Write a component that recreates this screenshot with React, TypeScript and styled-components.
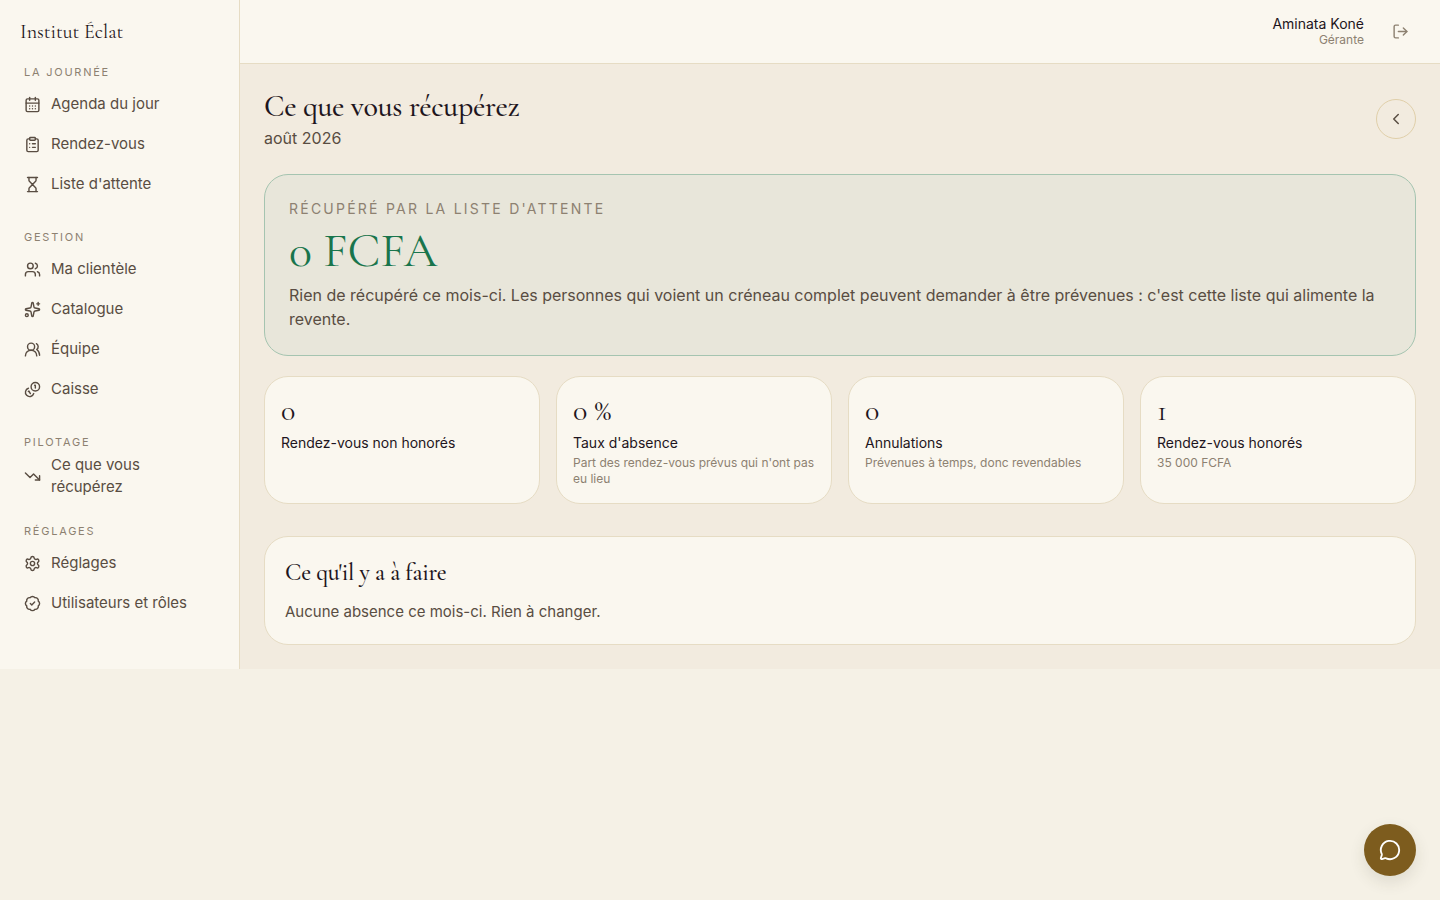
import React from "react";
import styled, { createGlobalStyle } from "styled-components";
import {
  BadgeCheck,
  CalendarDays,
  ChevronLeft,
  ClipboardList,
  Hourglass,
  LogOut,
  MessageCircle,
  Settings,
  Sparkles,
  TrendingDown,
  Users,
  UsersRound,
} from "lucide-react";

const color = {
  page: "#f5f1e6",
  main: "#f2ebdf",
  surface: "#faf7ef",
  line: "#e6dcc4",
  lineStrong: "#e0cfa9",
  ink: "#1e1520",
  body: "#594d42",
  muted: "#8d8171",
  green: "#19754c",
  greenSurface: "#e8e6da",
  greenLine: "#a5c4b0",
  gold: "#7d5c1e",
};

const serif = `"Cormorant Garamond", "Liberation Serif", serif`;

const GlobalStyle = createGlobalStyle`
  *, *::before, *::after { box-sizing: border-box; }
  body {
    margin: 0;
    background: ${color.page};
    color: ${color.ink};
    font: 400 16px/24px Inter, sans-serif;
  }
  h1, h2, p, ul { margin: 0; padding: 0; }
  ul { list-style: none; }
  button { font: inherit; cursor: pointer; }
`;

const Shell = styled.div`
  display: grid;
  grid-template-columns: 240px minmax(0, 1fr);
`;

const Sidebar = styled.aside`
  background: ${color.surface};
  border-right: 1px solid ${color.line};
`;

const Brand = styled.a`
  display: flex;
  align-items: center;
  height: 64px;
  padding: 0 20px;
  color: ${color.ink};
  font-family: ${serif};
  font-size: 20px;
  text-decoration: none;
`;

const Nav = styled.nav`
  display: flex;
  flex-direction: column;
  gap: 25px;
  padding: 0 12px 24px;
`;

const NavTitle = styled.h2`
  margin-bottom: 4px;
  padding: 0 12px;
  color: ${color.muted};
  font-size: 11px;
  font-weight: 400;
  line-height: 16px;
  letter-spacing: 0.16em;
  text-transform: uppercase;
`;

const NavLink = styled.a`
  display: flex;
  align-items: center;
  gap: 10px;
  min-height: 40px;
  padding: 0 12px;
  color: ${color.body};
  font-size: 15px;
  line-height: 22px;
  text-decoration: none;

  svg { flex: none; }
`;

const Column = styled.div`
  display: flex;
  flex-direction: column;
  min-width: 0;
`;

const TopBar = styled.header`
  display: flex;
  align-items: center;
  justify-content: flex-end;
  gap: 16px;
  height: 64px;
  padding: 0 20px 0 24px;
  background: ${color.surface};
  border-bottom: 1px solid ${color.line};
`;

const UserBlock = styled.div`
  text-align: right;
`;

const UserName = styled.p`
  font-size: 14px;
  line-height: 16px;
`;

const UserRole = styled.p`
  color: ${color.muted};
  font-size: 12px;
  line-height: 16px;
`;

const LogoutButton = styled.button`
  display: grid;
  place-items: center;
  width: 40px;
  height: 40px;
  padding: 0;
  border: 0;
  background: none;
  color: ${color.muted};
`;

const Main = styled.main`
  flex: 1;
  padding: 24px;
  background: ${color.main};
`;

const PageHead = styled.div`
  display: flex;
  align-items: center;
  justify-content: space-between;
  margin-bottom: 24px;
`;

const PageTitle = styled.h1`
  font-family: ${serif};
  font-size: 30px;
  font-weight: 500;
  line-height: 38px;
  letter-spacing: -0.01em;
`;

const Period = styled.p`
  color: ${color.body};
`;

const RoundButton = styled.button`
  display: grid;
  place-items: center;
  width: 40px;
  height: 40px;
  padding: 0;
  border: 1px solid ${color.lineStrong};
  border-radius: 50%;
  background: none;
  color: ${color.body};
`;

const Hero = styled.section`
  margin-bottom: 20px;
  padding: 24px;
  border: 1px solid ${color.greenLine};
  border-radius: 24px;
  background: ${color.greenSurface};
`;

const HeroLabel = styled.p`
  color: ${color.muted};
  font-size: 14px;
  line-height: 20px;
  letter-spacing: 0.16em;
  text-transform: uppercase;
`;

const HeroValue = styled.p`
  color: ${color.green};
  font-family: ${serif};
  font-size: 48px;
  line-height: 64px;
`;

const HeroText = styled.p`
  color: ${color.body};
`;

const Stats = styled.ul`
  display: grid;
  grid-template-columns: repeat(4, minmax(0, 1fr));
  gap: 16px;
  margin-bottom: 32px;
`;

const Stat = styled.li`
  padding: 16px;
  border: 1px solid ${color.line};
  border-radius: 24px;
  background: ${color.surface};
`;

const StatValue = styled.p`
  margin-bottom: 4px;
  font-family: ${serif};
  font-size: 30px;
  line-height: 36px;
`;

const StatLabel = styled.p`
  margin-bottom: 2px;
  font-size: 14px;
  line-height: 20px;
`;

const StatNote = styled.p`
  color: ${color.muted};
  font-size: 12px;
  line-height: 16px;
`;

const Panel = styled.section`
  padding: 20px;
  border: 1px solid ${color.line};
  border-radius: 24px;
  background: ${color.surface};
`;

const PanelTitle = styled.h2`
  margin-bottom: 11px;
  font-family: ${serif};
  font-size: 24px;
  font-weight: 500;
  line-height: 32px;
  letter-spacing: -0.01em;
`;

const PanelText = styled.p`
  color: ${color.body};
  font-size: 15px;
`;

const ChatButton = styled.button`
  position: fixed;
  right: 24px;
  bottom: 24px;
  display: grid;
  place-items: center;
  width: 52px;
  height: 52px;
  padding: 0;
  border: 0;
  border-radius: 50%;
  background: ${color.gold};
  color: #ffffff;
  box-shadow: 0 6px 16px rgba(60, 60, 30, 0.12);
`;

type IconProps = { size?: number; strokeWidth?: number };

/* Two overlapping coins, the full one in front at the top right. */
function CoinsIcon({ size = 24, strokeWidth = 2 }: IconProps) {
  return (
    <svg
      width={size}
      height={size}
      viewBox="0 0 24 24"
      fill="none"
      stroke="currentColor"
      strokeWidth={strokeWidth}
      strokeLinecap="round"
      strokeLinejoin="round"
      aria-hidden
    >
      <path d="M13.744 17.736a6 6 0 1 1-7.48-7.48" />
      <path d="M15 6h1v4" />
      <path d="m6.134 14.768.866-.5 2 3.464" />
      <circle cx="16" cy="8" r="6" />
    </svg>
  );
}

type NavItem = { label: string; icon: React.ComponentType<IconProps> };

const groups: { title: string; items: NavItem[] }[] = [
  {
    title: "La journée",
    items: [
      { label: "Agenda du jour", icon: CalendarDays },
      { label: "Rendez-vous", icon: ClipboardList },
      { label: "Liste d'attente", icon: Hourglass },
    ],
  },
  {
    title: "Gestion",
    items: [
      { label: "Ma clientèle", icon: Users },
      { label: "Catalogue", icon: Sparkles },
      { label: "Équipe", icon: UsersRound },
      { label: "Caisse", icon: CoinsIcon },
    ],
  },
  {
    title: "Pilotage",
    items: [{ label: "Ce que vous récupérez", icon: TrendingDown }],
  },
  {
    title: "Réglages",
    items: [
      { label: "Réglages", icon: Settings },
      { label: "Utilisateurs et rôles", icon: BadgeCheck },
    ],
  },
];

const stats = [
  { value: "0", label: "Rendez-vous non honorés" },
  {
    value: "0 %",
    label: "Taux d'absence",
    note: "Part des rendez-vous prévus qui n'ont pas eu lieu",
  },
  { value: "0", label: "Annulations", note: "Prévenues à temps, donc revendables" },
  { value: "1", label: "Rendez-vous honorés", note: "35 000 FCFA" },
];

export default function App() {
  return (
    <>
      <GlobalStyle />
      <Shell>
        <Sidebar>
          <Brand href="#">Institut Éclat</Brand>
          <Nav>
            {groups.map((group) => (
              <div key={group.title}>
                <NavTitle>{group.title}</NavTitle>
                <ul>
                  {group.items.map(({ label, icon: Icon }) => (
                    <li key={label}>
                      <NavLink href="#">
                        <Icon size={17} strokeWidth={2} />
                        {label}
                      </NavLink>
                    </li>
                  ))}
                </ul>
              </div>
            ))}
          </Nav>
        </Sidebar>
        <Column>
          <TopBar>
            <UserBlock>
              <UserName>Aminata Koné</UserName>
              <UserRole>Gérante</UserRole>
            </UserBlock>
            <LogoutButton aria-label="Se déconnecter">
              <LogOut size={17} strokeWidth={2} />
            </LogoutButton>
          </TopBar>
          <Main>
            <PageHead>
              <div>
                <PageTitle>Ce que vous récupérez</PageTitle>
                <Period>août 2026</Period>
              </div>
              <RoundButton aria-label="Mois précédent">
                <ChevronLeft size={18} strokeWidth={2} />
              </RoundButton>
            </PageHead>
            <Hero>
              <HeroLabel>Récupéré par la liste d'attente</HeroLabel>
              <HeroValue>0 FCFA</HeroValue>
              <HeroText>
                Rien de récupéré ce mois-ci. Les personnes qui voient un créneau complet peuvent
                demander à être prévenues : c'est cette liste qui alimente la revente.
              </HeroText>
            </Hero>
            <Stats>
              {stats.map((stat) => (
                <Stat key={stat.label}>
                  <StatValue>{stat.value}</StatValue>
                  <StatLabel>{stat.label}</StatLabel>
                  {stat.note && <StatNote>{stat.note}</StatNote>}
                </Stat>
              ))}
            </Stats>
            <Panel>
              <PanelTitle>Ce qu'il y a à faire</PanelTitle>
              <PanelText>Aucune absence ce mois-ci. Rien à changer.</PanelText>
            </Panel>
          </Main>
        </Column>
      </Shell>
      <ChatButton aria-label="Ouvrir la discussion">
        <MessageCircle size={22} strokeWidth={2} />
      </ChatButton>
    </>
  );
}
